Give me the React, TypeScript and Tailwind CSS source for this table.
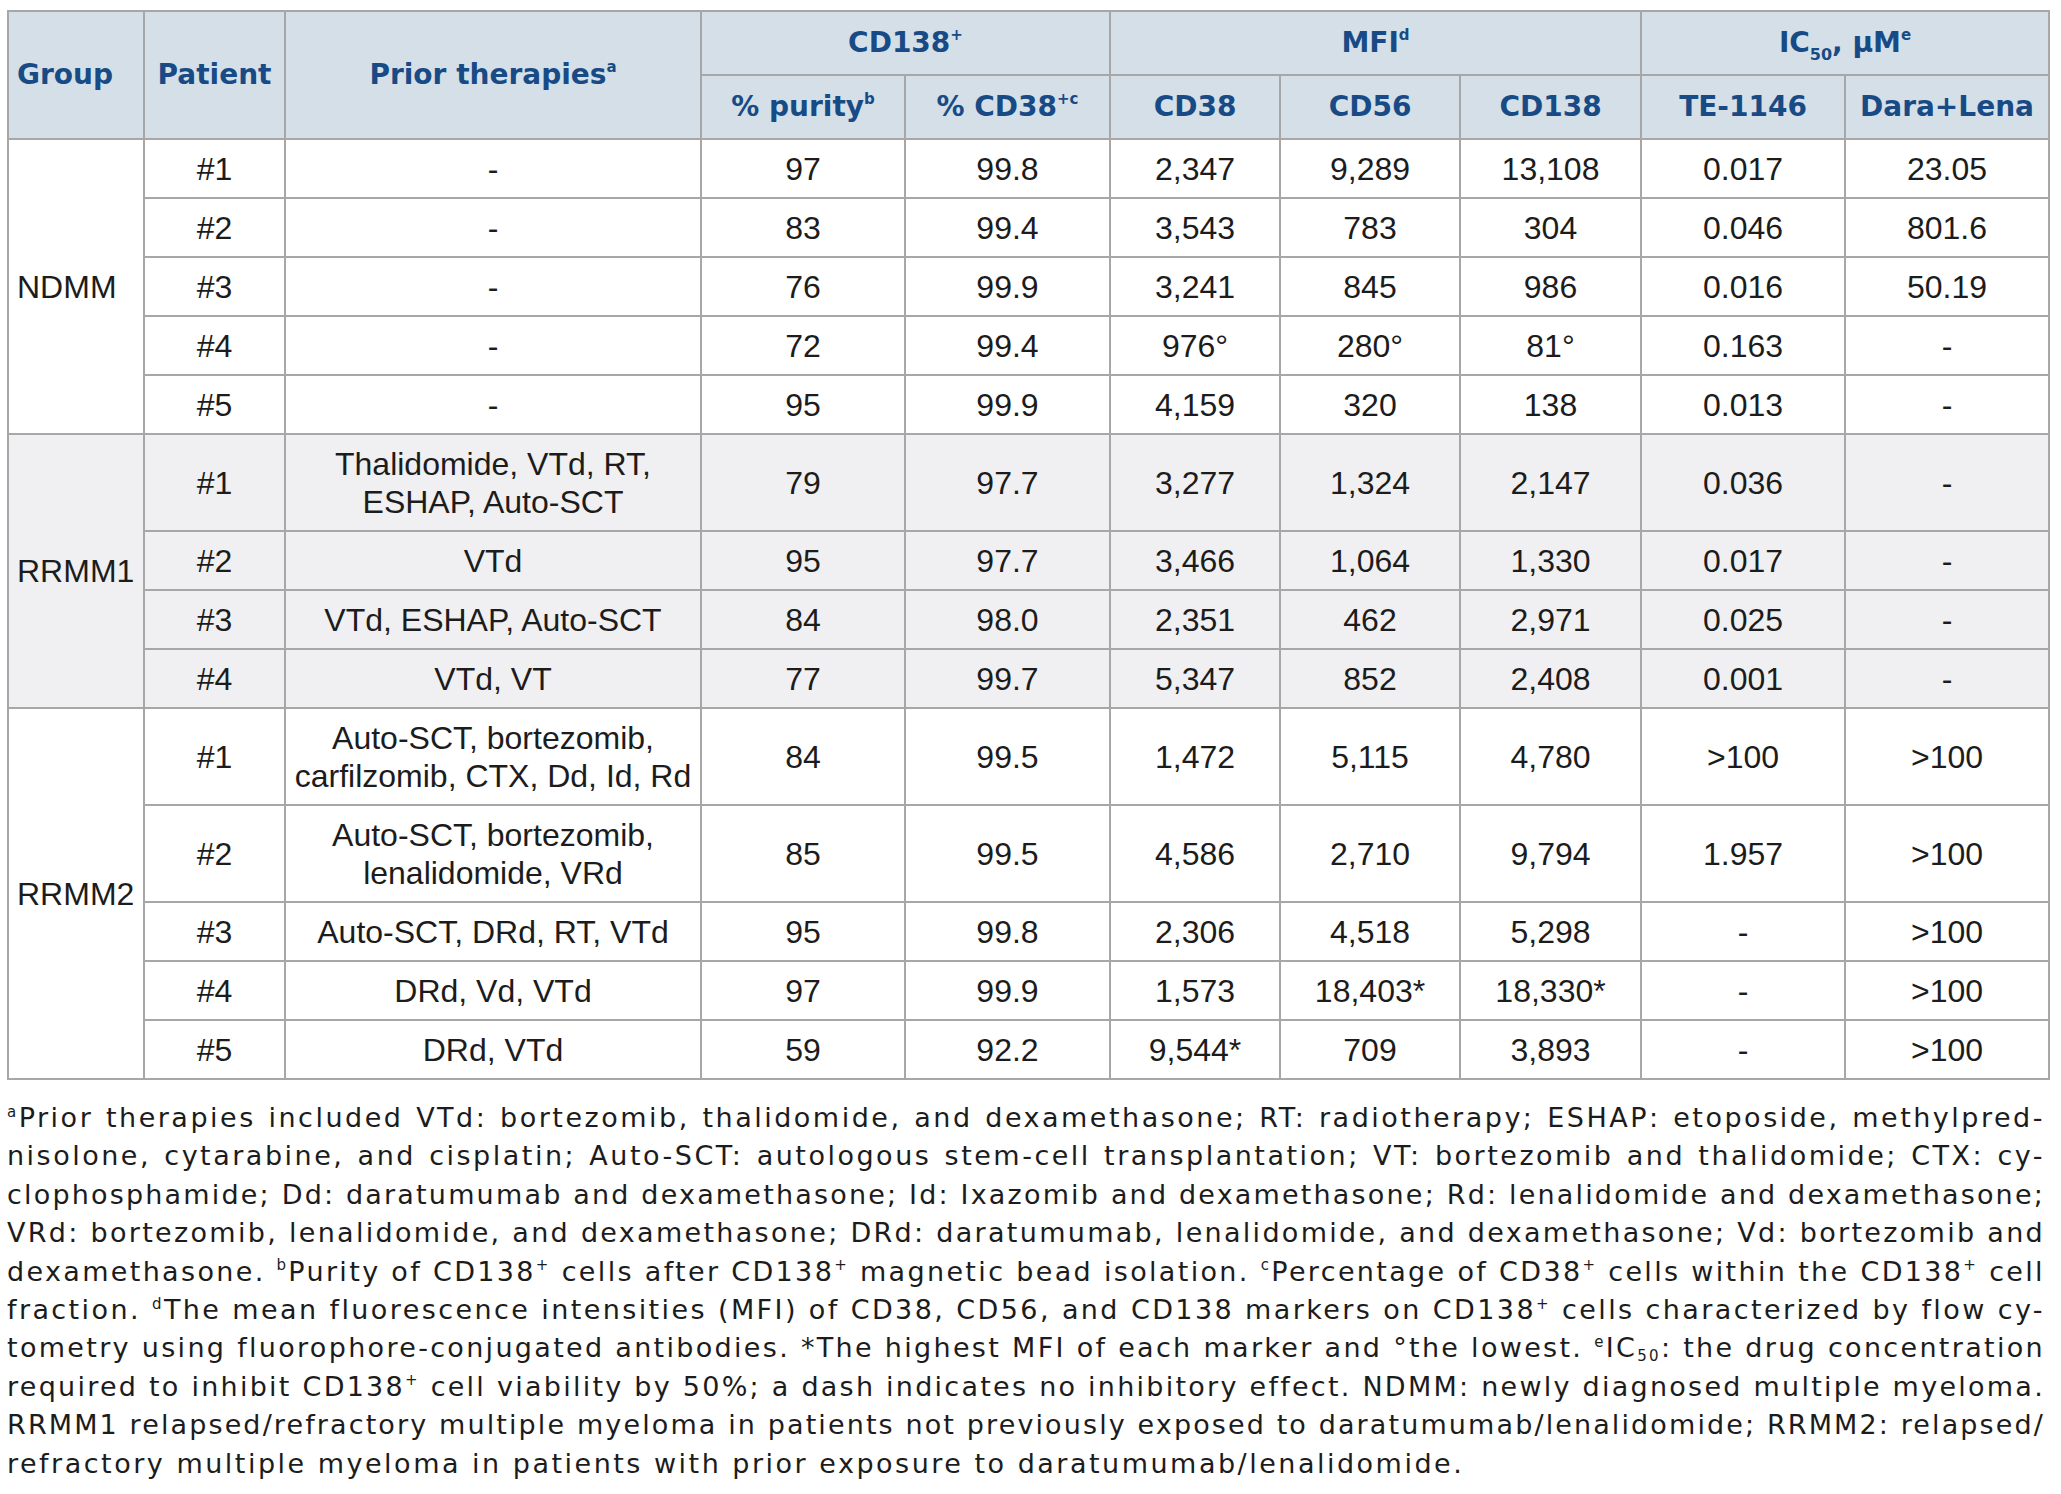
import React, { useLayoutEffect, useRef, useState } from "react";

const HEAD = "font-['DejaVu_Sans',sans-serif] font-bold text-[28px] text-[#184b85] bg-[#d5dfe8] border-2 border-[#a7a7a7] text-center align-middle p-0";
const CELL = "border-2 border-[#a7a7a7] text-center align-middle p-0";

type Row = { p: string; t: React.ReactNode; v: string[]; tall?: boolean };
type Group = { name: string; bg: string; rows: Row[] };

const groups: Group[] = [
  {
    name: "NDMM",
    bg: "bg-white",
    rows: [
      { p: "#1", t: "-", v: ["97", "99.8", "2,347", "9,289", "13,108", "0.017", "23.05"] },
      { p: "#2", t: "-", v: ["83", "99.4", "3,543", "783", "304", "0.046", "801.6"] },
      { p: "#3", t: "-", v: ["76", "99.9", "3,241", "845", "986", "0.016", "50.19"] },
      { p: "#4", t: "-", v: ["72", "99.4", "976°", "280°", "81°", "0.163", "-"] },
      { p: "#5", t: "-", v: ["95", "99.9", "4,159", "320", "138", "0.013", "-"] },
    ],
  },
  {
    name: "RRMM1",
    bg: "bg-[#f0f0f2]",
    rows: [
      {
        p: "#1",
        t: (
          <>
            Thalidomide, VTd, RT,
            <br />
            ESHAP, Auto-SCT
          </>
        ),
        v: ["79", "97.7", "3,277", "1,324", "2,147", "0.036", "-"],
        tall: true,
      },
      { p: "#2", t: "VTd", v: ["95", "97.7", "3,466", "1,064", "1,330", "0.017", "-"] },
      { p: "#3", t: "VTd, ESHAP, Auto-SCT", v: ["84", "98.0", "2,351", "462", "2,971", "0.025", "-"] },
      { p: "#4", t: "VTd, VT", v: ["77", "99.7", "5,347", "852", "2,408", "0.001", "-"] },
    ],
  },
  {
    name: "RRMM2",
    bg: "bg-white",
    rows: [
      {
        p: "#1",
        t: (
          <>
            Auto-SCT, bortezomib,
            <br />
            carfilzomib, CTX, Dd, Id, Rd
          </>
        ),
        v: ["84", "99.5", "1,472", "5,115", "4,780", ">100", ">100"],
        tall: true,
      },
      {
        p: "#2",
        t: (
          <>
            Auto-SCT, bortezomib,
            <br />
            lenalidomide, VRd
          </>
        ),
        v: ["85", "99.5", "4,586", "2,710", "9,794", "1.957", ">100"],
        tall: true,
      },
      { p: "#3", t: "Auto-SCT, DRd, RT, VTd", v: ["95", "99.8", "2,306", "4,518", "5,298", "-", ">100"] },
      { p: "#4", t: "DRd, Vd, VTd", v: ["97", "99.9", "1,573", "18,403*", "18,330*", "-", ">100"] },
      { p: "#5", t: "DRd, VTd", v: ["59", "92.2", "9,544*", "709", "3,893", "-", ">100"] },
    ],
  },
];

const Sup = ({ children }: { children: React.ReactNode }) => (
  <sup className="text-[15px] top-[-0.8em]">{children}</sup>
);
const FSup = ({ children }: { children: React.ReactNode }) => (
  <sup className="text-[15px] top-[-0.7em]">{children}</sup>
);

const lines: React.ReactNode[] = [
  <>
    <FSup>a</FSup>Prior therapies included VTd: bortezomib, thalidomide, and dexamethasone; RT: radiotherapy; ESHAP: etoposide, methylpred-
  </>,
  <>nisolone, cytarabine, and cisplatin; Auto-SCT: autologous stem-cell transplantation; VT: bortezomib and thalidomide; CTX: cy-</>,
  <>clophosphamide; Dd: daratumumab and dexamethasone; Id: Ixazomib and dexamethasone; Rd: lenalidomide and dexamethasone;</>,
  <>VRd: bortezomib, lenalidomide, and dexamethasone; DRd: daratumumab, lenalidomide, and dexamethasone; Vd: bortezomib and</>,
  <>
    dexamethasone. <FSup>b</FSup>Purity of CD138<FSup>+</FSup> cells after CD138<FSup>+</FSup> magnetic bead isolation.{" "}
    <FSup>c</FSup>Percentage of CD38<FSup>+</FSup> cells within the CD138<FSup>+</FSup> cell
  </>,
  <>
    fraction. <FSup>d</FSup>The mean fluorescence intensities (MFI) of CD38, CD56, and CD138 markers on CD138<FSup>+</FSup> cells characterized by flow cy-
  </>,
  <>
    tometry using fluorophore-conjugated antibodies. *The highest MFI of each marker and °the lowest. <FSup>e</FSup>IC
    <sub className="text-[15px]">50</sub>: the drug concentration
  </>,
  <>
    required to inhibit CD138<FSup>+</FSup> cell viability by 50%; a dash indicates no inhibitory effect. NDMM: newly diagnosed multiple myeloma.
  </>,
  <>RRMM1 relapsed/refractory multiple myeloma in patients not previously exposed to daratumumab/lenalidomide; RRMM2: relapsed/</>,
  <>refractory multiple myeloma in patients with prior exposure to daratumumab/lenalidomide.</>,
];

const LINE_W = 2038;
const BASE_LS = 2.5;

function Footnote() {
  const refs = useRef<(HTMLSpanElement | null)[]>([]);
  const [styles, setStyles] = useState<Record<number, React.CSSProperties>>({});

  useLayoutEffect(() => {
    const measure = () => {
      const out: Record<number, React.CSSProperties> = {};
      refs.current.forEach((el, i) => {
        if (!el || i === lines.length - 1) return;
        const w = el.getBoundingClientRect().width;
        const text = el.textContent || "";
        const spaces = (text.match(/ /g) || []).length || 1;
        const chars = text.length || 1;
        let ls = BASE_LS;
        let extra = LINE_W - w;
        if (extra < 0) {
          ls = BASE_LS + extra / chars;
          extra = 0;
        }
        out[i] = { letterSpacing: `${ls}px`, wordSpacing: `${extra / spaces}px` };
      });
      setStyles(out);
    };
    measure();
    if (document.fonts && document.fonts.ready) {
      document.fonts.ready.then(() => {
        setStyles({});
        requestAnimationFrame(measure);
      });
    }
  }, []);

  return (
    <div className="mt-[19px] w-[2038px] font-['DejaVu_Sans',sans-serif] text-[27px] leading-[38.4px] text-[#1c1c1c] tracking-[2.5px]">
      {lines.map((l, i) => (
        <div key={i} className="whitespace-nowrap">
          <span
            ref={(el) => {
              refs.current[i] = el;
            }}
            className="inline-block"
            style={styles[i]}
          >
            {l}
          </span>
        </div>
      ))}
    </div>
  );
}

export default function App() {
  return (
    <div className="w-[2061px] min-h-[1494px] bg-white pt-[10px] pl-[7px]">
      <table className="table-fixed border-collapse w-[2041px] font-['Liberation_Sans',Arial,sans-serif] text-[32px] text-[#1c1c1c]">
        <colgroup>
          <col className="w-[136px]" />
          <col className="w-[141px]" />
          <col className="w-[416px]" />
          <col className="w-[204px]" />
          <col className="w-[205px]" />
          <col className="w-[170px]" />
          <col className="w-[180px]" />
          <col className="w-[181px]" />
          <col className="w-[204px]" />
          <col className="w-[204px]" />
        </colgroup>
        <thead>
          <tr className="h-[64px]">
            <th rowSpan={2} className={HEAD + " text-left pl-[8px]"}>Group</th>
            <th rowSpan={2} className={HEAD}>Patient</th>
            <th rowSpan={2} className={HEAD}>
              Prior therapies<Sup>a</Sup>
            </th>
            <th colSpan={2} className={HEAD}>
              CD138<Sup>+</Sup>
            </th>
            <th colSpan={3} className={HEAD}>
              MFI<Sup>d</Sup>
            </th>
            <th colSpan={2} className={HEAD}>
              IC<sub className="text-[16px] bottom-[-0.5em]">50</sub>, µM<Sup>e</Sup>
            </th>
          </tr>
          <tr className="h-[64px]">
            <th className={HEAD}>
              % purity<Sup>b</Sup>
            </th>
            <th className={HEAD}>
              % CD38<Sup>+c</Sup>
            </th>
            <th className={HEAD}>CD38</th>
            <th className={HEAD}>CD56</th>
            <th className={HEAD}>CD138</th>
            <th className={HEAD}>TE-1146</th>
            <th className={HEAD}>Dara+Lena</th>
          </tr>
        </thead>
        <tbody>
          {groups.map((g) =>
            g.rows.map((r, i) => (
              <tr key={g.name + r.p} className={(r.tall ? "h-[97px] " : "h-[59px] ") + g.bg}>
                {i === 0 && (
                  <td rowSpan={g.rows.length} className={CELL + " text-left pl-[8px]"}>
                    {g.name}
                  </td>
                )}
                <td className={CELL}>{r.p}</td>
                <td className={CELL + " leading-[38px] whitespace-nowrap"}>{r.t}</td>
                {r.v.map((v, j) => (
                  <td key={j} className={CELL}>
                    {v}
                  </td>
                ))}
              </tr>
            ))
          )}
        </tbody>
      </table>
      <Footnote />
    </div>
  );
}
